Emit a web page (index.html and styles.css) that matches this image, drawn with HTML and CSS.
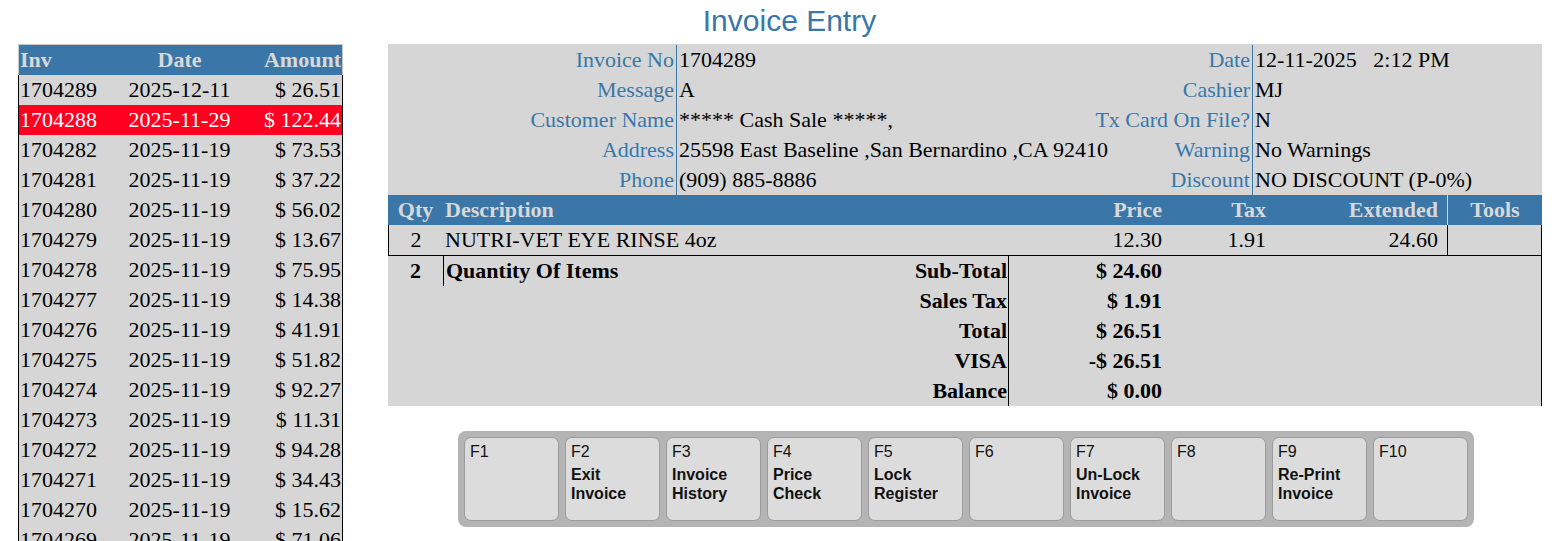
FILE: index.html
```html
<!DOCTYPE html>
<html lang="en">
<head>
<meta charset="utf-8">
<title>Invoice Entry</title>
<link rel="stylesheet" href="styles.css">
</head>
<body>
<h1 class="title">Invoice Entry</h1>
<div class="layout">
  <div class="list">
    <div class="list-head"><span class="c-inv">Inv</span><span class="c-date">Date</span><span class="c-amt">Amount</span></div>
    <div class="list-row"><span class="c-inv">1704289</span><span class="c-date">2025-12-11</span><span class="c-amt">$ 26.51</span></div>
    <div class="list-row sel"><span class="c-inv">1704288</span><span class="c-date">2025-11-29</span><span class="c-amt">$ 122.44</span></div>
    <div class="list-row"><span class="c-inv">1704282</span><span class="c-date">2025-11-19</span><span class="c-amt">$ 73.53</span></div>
    <div class="list-row"><span class="c-inv">1704281</span><span class="c-date">2025-11-19</span><span class="c-amt">$ 37.22</span></div>
    <div class="list-row"><span class="c-inv">1704280</span><span class="c-date">2025-11-19</span><span class="c-amt">$ 56.02</span></div>
    <div class="list-row"><span class="c-inv">1704279</span><span class="c-date">2025-11-19</span><span class="c-amt">$ 13.67</span></div>
    <div class="list-row"><span class="c-inv">1704278</span><span class="c-date">2025-11-19</span><span class="c-amt">$ 75.95</span></div>
    <div class="list-row"><span class="c-inv">1704277</span><span class="c-date">2025-11-19</span><span class="c-amt">$ 14.38</span></div>
    <div class="list-row"><span class="c-inv">1704276</span><span class="c-date">2025-11-19</span><span class="c-amt">$ 41.91</span></div>
    <div class="list-row"><span class="c-inv">1704275</span><span class="c-date">2025-11-19</span><span class="c-amt">$ 51.82</span></div>
    <div class="list-row"><span class="c-inv">1704274</span><span class="c-date">2025-11-19</span><span class="c-amt">$ 92.27</span></div>
    <div class="list-row"><span class="c-inv">1704273</span><span class="c-date">2025-11-19</span><span class="c-amt">$ 11.31</span></div>
    <div class="list-row"><span class="c-inv">1704272</span><span class="c-date">2025-11-19</span><span class="c-amt">$ 94.28</span></div>
    <div class="list-row"><span class="c-inv">1704271</span><span class="c-date">2025-11-19</span><span class="c-amt">$ 34.43</span></div>
    <div class="list-row"><span class="c-inv">1704270</span><span class="c-date">2025-11-19</span><span class="c-amt">$ 15.62</span></div>
    <div class="list-row"><span class="c-inv">1704269</span><span class="c-date">2025-11-19</span><span class="c-amt">$ 71.06</span></div>
  </div>

  <div class="main">
    <div class="panel">
      <div class="info">
        <div class="lbl">Invoice No</div><div class="val">1704289</div>
        <div class="lbl">Date</div><div class="val">12-11-2025&nbsp;&nbsp;&nbsp;2:12 PM</div>

        <div class="lbl">Message</div><div class="val">A</div>
        <div class="lbl">Cashier</div><div class="val">MJ</div>

        <div class="lbl">Customer Name</div><div class="val">***** Cash Sale *****,</div>
        <div class="lbl">Tx Card On File?</div><div class="val">N</div>

        <div class="lbl">Address</div><div class="val">25598 East Baseline ,San Bernardino ,CA 92410</div>
        <div class="lbl">Warning</div><div class="val">No Warnings</div>

        <div class="lbl">Phone</div><div class="val">(909) 885-8886</div>
        <div class="lbl">Discount</div><div class="val">NO DISCOUNT (P-0%)</div>
      </div>

      <div class="items-head">
        <div class="i-qty">Qty</div>
        <div class="i-desc">Description</div>
        <div class="i-price">Price</div>
        <div class="i-tax">Tax</div>
        <div class="i-ext">Extended</div>
        <div class="i-tools">Tools</div>
      </div>
      <div class="item-row">
        <div class="i-qty">2</div>
        <div class="i-desc">NUTRI-VET EYE RINSE 4oz</div>
        <div class="i-price">12.30</div>
        <div class="i-tax">1.91</div>
        <div class="i-ext">24.60</div>
        <div class="i-tools"></div>
      </div>

      <div class="totals">
        <div class="t-qty">2</div>
        <div class="t-lbl first"><span class="t-count">Quantity Of Items</span><span>Sub-Total</span></div>
        <div class="t-val">$ 24.60</div>
        <div class="t-rest"></div>

        <div class="t-qty"></div>
        <div class="t-lbl"><span>Sales Tax</span></div>
        <div class="t-val">$ 1.91</div>
        <div class="t-rest"></div>

        <div class="t-qty"></div>
        <div class="t-lbl"><span>Total</span></div>
        <div class="t-val">$ 26.51</div>
        <div class="t-rest"></div>

        <div class="t-qty"></div>
        <div class="t-lbl"><span>VISA</span></div>
        <div class="t-val">-$ 26.51</div>
        <div class="t-rest"></div>

        <div class="t-qty"></div>
        <div class="t-lbl"><span>Balance</span></div>
        <div class="t-val">$ 0.00</div>
        <div class="t-rest"></div>
      </div>
    </div>

    <div class="keys">
      <div class="key"><div class="fn">F1</div></div>
      <div class="key"><div class="fn">F2</div><div class="act">Exit<br>Invoice</div></div>
      <div class="key"><div class="fn">F3</div><div class="act">Invoice<br>History</div></div>
      <div class="key"><div class="fn">F4</div><div class="act">Price<br>Check</div></div>
      <div class="key"><div class="fn">F5</div><div class="act">Lock<br>Register</div></div>
      <div class="key"><div class="fn">F6</div></div>
      <div class="key"><div class="fn">F7</div><div class="act">Un-Lock<br>Invoice</div></div>
      <div class="key"><div class="fn">F8</div></div>
      <div class="key"><div class="fn">F9</div><div class="act">Re-Print<br>Invoice</div></div>
      <div class="key"><div class="fn">F10</div></div>
    </div>
  </div>
</div>
</body>
</html>
```

FILE: styles.css
```css
* { box-sizing: border-box; }

html, body {
  margin: 0;
  padding: 0;
  overflow: hidden;
  background: #ffffff;
}

body {
  font-family: "Liberation Serif", "Times New Roman", serif;
  font-size: 22px;
  color: #000;
}

.title {
  margin: 0;
  height: 44px;
  padding: 4px 0 0 22px;
  text-align: center;
  font-family: "Liberation Sans", Arial, sans-serif;
  font-weight: normal;
  font-size: 30px;
  line-height: 34px;
  color: #3a77a8;
}

.layout {
  display: flex;
  align-items: flex-start;
  gap: 45px;
  padding-left: 18px;
}

/* ---------- left invoice list ---------- */
.list {
  width: 325px;
  flex: none;
}

.list-head,
.list-row {
  display: grid;
  grid-template-columns: 90px 1fr 92px;
  line-height: 30px;
  white-space: nowrap;
}

.list-head {
  height: 31px;
  background: #3a77a8;
  border: 1px solid #c8c8c8;
  border-bottom: none;
  color: #d8d8d8;
  font-weight: bold;
}

.list-row {
  height: 30px;
  background: #d6d6d6;
  border-left: 1px solid #000;
  border-right: 1px solid #000;
}

.list-row.sel {
  background: #ff0020;
  color: #ffffff;
}

.c-inv { padding-left: 1px; }
.c-date { text-align: center; }
.c-amt { text-align: right; padding-right: 1px; }

/* ---------- main panel ---------- */
.main {
  width: 1154px;
  flex: none;
}

.panel {
  background: #d6d6d6;
  padding-top: 1px;
}

.info {
  display: grid;
  grid-template-columns: 288px 406px 170px 290px;
  grid-auto-rows: 30px;
  line-height: 30px;
  white-space: nowrap;
}

.info .lbl {
  text-align: right;
  padding-right: 2px;
  color: #3a77a8;
}

.info .val {
  border-left: 1px solid #3a77a8;
  padding-left: 2px;
  overflow: visible;
}

.items-head,
.item-row {
  display: grid;
  grid-template-columns: 55px 566px 155px 104px 179px 95px;
  white-space: nowrap;
}

.items-head {
  height: 30px;
  line-height: 30px;
  background: #3a77a8;
  color: #d8d8d8;
  font-weight: bold;
}

.item-row {
  height: 31px;
  line-height: 30px;
  border-bottom: 1px solid #000;
}

.i-qty { text-align: center; }
.i-desc { padding-left: 2px; }
.i-price { text-align: right; padding-right: 2px; }
.i-tax { text-align: right; padding-right: 2px; }
.i-ext { text-align: right; padding-right: 9px; }
.i-tools { text-align: center; }

.items-head .i-tools { border-left: 1px solid #d8d8d8; }

.item-row .i-qty { border-left: 1px solid #000; }
.item-row .i-tools {
  border-left: 1px solid #000;
  border-right: 1px solid #000;
}

.totals {
  display: grid;
  grid-template-columns: 55px 566px 155px 1fr;
  grid-auto-rows: 30px;
  line-height: 30px;
  font-weight: bold;
  border-right: 1px solid #000;
  white-space: nowrap;
}

.t-qty { text-align: center; }

.t-lbl {
  display: flex;
  justify-content: flex-end;
  border-right: 1px solid #000;
  padding-right: 1px;
}

.t-lbl.first {
  justify-content: space-between;
  border-left: 1px solid #000;
  padding-left: 2px;
}

.t-val {
  text-align: right;
  padding-right: 2px;
}

/* ---------- function keys ---------- */
.keys {
  display: flex;
  gap: 6px;
  width: 1016px;
  margin: 25px 0 0 70px;
  padding: 6px;
  background: #b4b4b4;
  border-radius: 8px;
}

.key {
  width: 95px;
  height: 84px;
  flex: none;
  padding: 4px 5px;
  background: #dcdcdc;
  border: 1px solid #9c9c9c;
  border-radius: 7px;
  font-family: "Liberation Sans", Arial, sans-serif;
  font-size: 16px;
  line-height: 19px;
  color: #111;
}

.fn { margin-bottom: 4px; }
.act { font-weight: bold; }
```
